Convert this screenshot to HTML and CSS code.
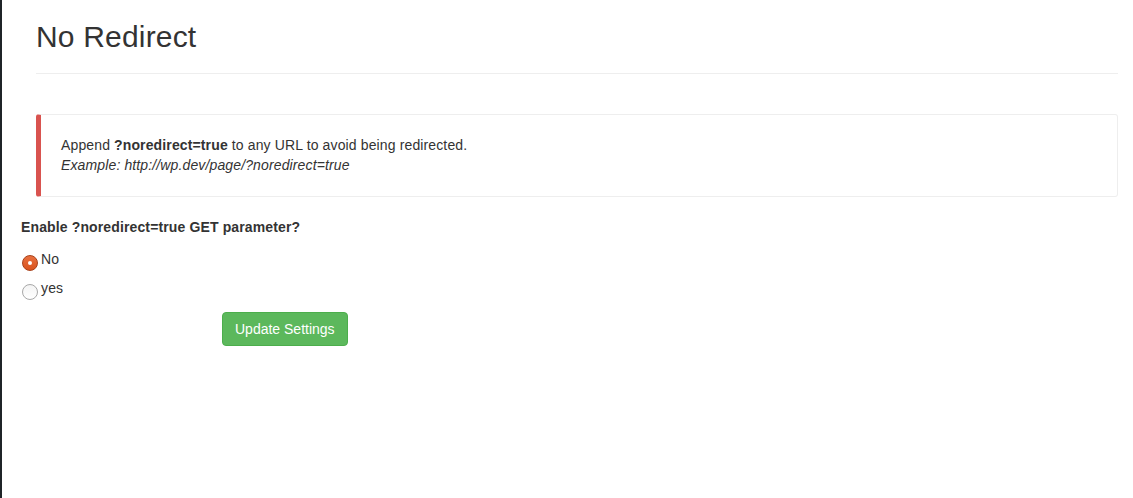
FILE: index.html
```html
<!DOCTYPE html>
<html>
<head>
<meta charset="utf-8">
<title>No Redirect</title>
<link rel="stylesheet" href="styles.css">
</head>
<body>
<div class="wrap">
  <div class="container">
    <div class="page-header">
      <h1>No Redirect</h1>
    </div>
    <div class="callout">
      <p>Append <strong>?noredirect=true</strong> to any URL to avoid being redirected.<br>
      <em>Example: http://wp.dev/page/?noredirect=true</em></p>
    </div>
  </div>
  <form class="settings">
    <div class="field-label">Enable ?noredirect=true GET parameter?</div>
    <div class="radios">
      <label class="radio-row"><span class="radio checked"></span><span class="radio-text">No</span></label>
      <label class="radio-row"><span class="radio"></span><span class="radio-text">yes</span></label>
    </div>
    <div class="actions">
      <button type="button" class="btn-success">Update Settings</button>
    </div>
  </form>
</div>
</body>
</html>
```
FILE: styles.css
```css
html, body {
  margin: 0;
  padding: 0;
  background: #fff;
}
body {
  border-left: 2px solid #1f2428;
  min-height: 498px;
  box-sizing: border-box;
  font-family: "Liberation Sans", Arial, sans-serif;
  font-size: 14px;
  line-height: 20px;
  color: #333;
  letter-spacing: 0.13px;
}
.wrap {
  padding-left: 19px;
}
.container {
  padding: 0 15px;
}
.page-header {
  padding-top: 20px;
  padding-bottom: 20px;
  border-bottom: 1px solid #eee;
}
.page-header h1 {
  margin: 0;
  font-size: 30px;
  line-height: 33px;
  font-weight: 400;
  color: #333;
  letter-spacing: 0.18px;
}
.callout {
  margin-top: 40px;
  padding: 20px 20px 21px;
  border: 1px solid #eee;
  border-left: 5px solid #d9534f;
  border-radius: 3px;
}
.callout p {
  margin: 0;
}
.settings {
  margin-top: 20px;
}
.field-label {
  font-weight: 700;
}
.radios {
  margin-top: 12px;
  display: flex;
  flex-direction: column;
  gap: 7px;
}
.radio-row {
  display: flex;
  align-items: flex-start;
}
.radio {
  width: 16px;
  height: 16px;
  box-sizing: border-box;
  border-radius: 50%;
  border: 1px solid #a8a8a8;
  background: linear-gradient(#f4f4f4, #ffffff);
  margin: 6px 3px 0 1px;
  position: relative;
  flex: none;
}
.radio.checked {
  border-color: #a8411a;
  background: linear-gradient(#e8703f, #d9531e);
}
.radio.checked::after {
  content: "";
  position: absolute;
  left: 5px;
  top: 5px;
  width: 4px;
  height: 4px;
  border-radius: 50%;
  background: #fff;
}
.actions {
  margin-top: 12px;
  padding-left: 201px;
}
.btn-success {
  font-family: "Liberation Sans", Arial, sans-serif;
  font-size: 14px;
  line-height: 20px;
  padding: 6px 12px;
  color: #fff;
  background: #5cb85c;
  border: 1px solid #4cae4c;
  border-radius: 4px;
  cursor: pointer;
}
```
